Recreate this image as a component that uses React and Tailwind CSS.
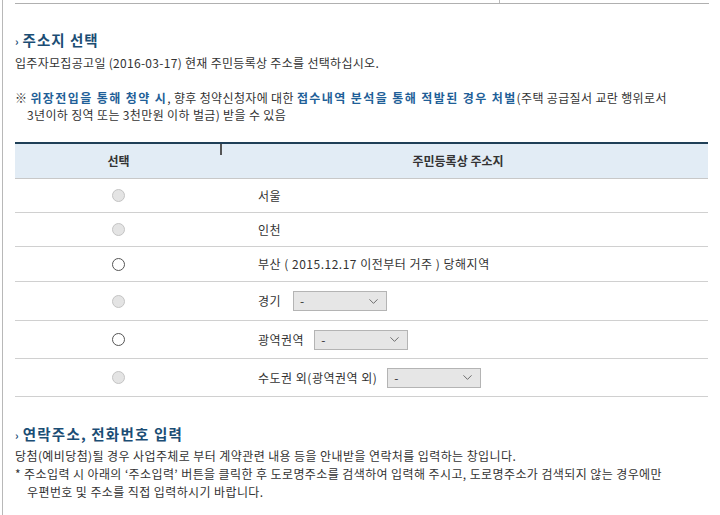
import { ChevronDown } from "lucide-react"

const font = { fontFamily: '"Noto Sans CJK KR", "Noto Sans", sans-serif' }

function Radio({ disabled }) {
  return (
    <span
      className={
        "inline-block h-[13px] w-[13px] rounded-full border " +
        (disabled ? "border-[#c4c4c4] bg-[#e4e4e4]" : "border-[#555] bg-white")
      }
    />
  )
}

function Select({ width }) {
  return (
    <span
      className="inline-flex h-[20px] items-center justify-between border border-[#b4b4b4] bg-[#e6e6e6] pl-[6px] pr-[5px] text-[12px] tracking-normal text-[#333]"
      style={{ width }}
    >
      <span>-</span>
      <ChevronDown size={15} strokeWidth={1.2} className="text-[#444]" />
    </span>
  )
}

const rows = [
  { disabled: true, label: "서울", h: "h-[34px]" },
  { disabled: true, label: "인천", h: "h-[34px]" },
  { disabled: false, label: "부산 ( 2015.12.17 이전부터 거주 ) 당해지역", h: "h-[35px]" },
  { disabled: true, label: "경기", select: 94, gap: "mr-[12px]", h: "h-[39px]" },
  { disabled: false, label: "광역권역", select: 94, gap: "mr-[10px]", h: "h-[38px]" },
  { disabled: true, label: "수도권 외(광역권역 외)", select: 94, gap: "mr-[10px]", h: "h-[38px]" },
]

function App() {
  return (
    <div className="min-h-[515px] bg-white" style={font}>
      <div className="ml-[2px] min-h-[515px] border-l border-[#b8b8b8] pl-[12px] pr-[11px] text-[12px] text-[#333]">
        <div className="flex h-[4px] border-b border-[#b0b0b0]">
          <div className="w-[485px] border-r border-[#bbb]" />
        </div>

        <h2 className="mt-[26px] flex h-[20px] items-center text-[14.5px] font-bold leading-[20px] tracking-[1px] text-[#1b4d74]">
          <span className="mr-[3px] translate-y-[1px] text-[11px] font-bold leading-none">›</span>주소지 선택
        </h2>
        <p className="mt-[4px] leading-[18px] tracking-[0.3px]">
          입주자모집공고일 (2016-03-17) 현재 주민등록상 주소를 선택하십시오.
        </p>

        <div className="mt-[17px] leading-[17px] tracking-[0.35px]">
          <p>
            ※ <b className="tracking-[1.4px] text-[#1f5f98]">위장전입을 통해 청약 시</b>, 향후 청약신청자에 대한{" "}
            <b className="tracking-[1.4px] text-[#1f5f98]">접수내역 분석을 통해 적발된 경우 처벌</b>(주택 공급질서 교란 행위로서
          </p>
          <p className="pl-[12px]">3년이하 징역 또는 3천만원 이하 벌금) 받을 수 있음</p>
        </div>

        <div className="mt-[19px] w-[693px] border-t-[2px] border-[#1f3f57]">
          <div className="flex h-[35px] items-center border-b border-[#c8c8c8] bg-[#e2ecf5] font-bold text-[#333]">
            <div className="relative flex w-[207px] items-center justify-center self-stretch">
              선택
              <span className="absolute right-0 top-0 h-[11px] w-[2px] bg-[#555]" />
            </div>
            <div className="flex flex-1 justify-center pr-[14px]">주민등록상 주소지</div>
          </div>
          {rows.map((r, i) => (
            <div key={i} className={"flex items-center border-b border-[#d0d0d0] " + r.h}>
              <div className="flex w-[207px] justify-center">
                <Radio disabled={r.disabled} />
              </div>
              <div className="flex items-center pl-[36px] tracking-[0.5px]">
                <span className={r.gap || ""}>{r.label}</span>
                {r.select && <Select width={r.select} />}
              </div>
            </div>
          ))}
        </div>

        <h2 className="mt-[27px] flex h-[20px] items-center text-[14.5px] font-bold leading-[20px] tracking-[1.2px] text-[#1b4d74]">
          <span className="mr-[3px] translate-y-[1px] text-[11px] font-bold leading-none">›</span>연락주소, 전화번호 입력
        </h2>
        <div className="mt-[3px] leading-[18px] tracking-[0.4px]">
          <p>당첨(예비당첨)될 경우 사업주체로 부터 계약관련 내용 등을 안내받을 연락처를 입력하는 창입니다.</p>
          <p>* 주소입력 시 아래의 ‘주소입력’ 버튼을 클릭한 후 도로명주소를 검색하여 입력해 주시고, 도로명주소가 검색되지 않는 경우에만</p>
          <p className="pl-[12px]">우편번호 및 주소를 직접 입력하시기 바랍니다.</p>
        </div>
      </div>
    </div>
  )
}

export default App
